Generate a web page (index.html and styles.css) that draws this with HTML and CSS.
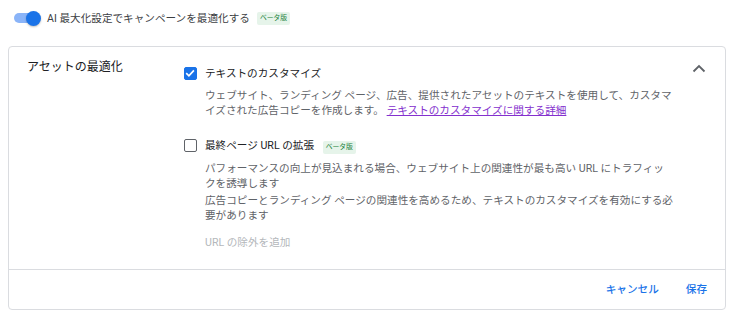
FILE: index.html
```html
<!DOCTYPE html>
<html lang="ja">
<head>
<meta charset="utf-8">
<title>アセットの最適化</title>
<link rel="stylesheet" href="styles.css">
</head>
<body>

<div class="top-bar">
  <span class="toggle"><span class="toggle-thumb"></span></span>
  <span class="top-label">AI 最大化設定でキャンペーンを最適化する</span>
  <span class="beta">ベータ版</span>
</div>

<div class="card">
  <div class="section">
    <div class="section-title">アセットの最適化</div>

    <div class="options">
      <div class="option">
        <span class="checkbox checked">
          <svg viewBox="0 0 14 14" width="14" height="14"><path d="M3.2 7.2 L5.9 9.8 L10.9 4.4" fill="none" stroke="#fff" stroke-width="1.7"/></svg>
        </span>
        <div class="option-body">
          <div class="option-title">テキストのカスタマイズ</div>
          <p class="desc">ウェブサイト、ランディング ページ、広告、提供されたアセットのテキストを使用して、カスタマイズされた広告コピーを作成します。 <a href="#" class="link">テキストのカスタマイズに関する詳細</a></p>
        </div>
      </div>

      <div class="option option-second">
        <span class="checkbox"></span>
        <div class="option-body">
          <div class="option-title">最終ページ URL の拡張 <span class="beta">ベータ版</span></div>
          <p class="desc">パフォーマンスの向上が見込まれる場合、ウェブサイト上の関連性が最も高い URL にトラフィッ<br>クを誘導します</p>
          <p class="desc desc-next">広告コピーとランディング ページの関連性を高めるため、テキストのカスタマイズを有効にする必要があります</p>
          <div class="add-exclusion">URL の除外を追加</div>
        </div>
      </div>
    </div>

    <div class="collapse">
      <svg viewBox="0 0 14 9" width="14" height="9"><path d="M1.5 7.5 L7 2 L12.5 7.5" fill="none" stroke="#5f6368" stroke-width="1.8"/></svg>
    </div>
  </div>

  <div class="footer">
    <a href="#" class="btn">キャンセル</a>
    <a href="#" class="btn">保存</a>
  </div>
</div>

</body>
</html>
```

FILE: styles.css
```css
body {
  margin: 0;
  font-family: Roboto, "Noto Sans CJK JP", sans-serif;
  font-size: 10.62px;
  line-height: 15px;
  color: #3c4043;
  background: #fff;
}

/* top toggle row */
.top-bar {
  display: flex;
  align-items: center;
  height: 36px;
  padding-left: 14px;
}

.toggle {
  display: flex;
  align-items: center;
  justify-content: flex-end;
  width: 24px;
  height: 10px;
  border-radius: 5px;
  background: #8ab4f8;
}

.toggle-thumb {
  width: 15px;
  height: 15px;
  border-radius: 50%;
  margin-right: -3px;
  background: #1a73e8;
  box-shadow: 0 1px 2px rgba(0, 0, 0, 0.25);
}

.top-label {
  margin-left: 9px;
}

.beta {
  display: inline-block;
  margin-left: 7px;
  padding: 0 3px;
  font-size: 6.8px;
  line-height: 13px;
  color: #188038;
  background: #e6f4ea;
  border-radius: 2px;
  vertical-align: 1px;
}

/* card */
.card {
  margin: 10px 10px 8px 8px;
  border: 1px solid #dadce0;
  border-radius: 4px;
}

.section {
  display: flex;
  padding: 12px 0 19px 18px;
  border-bottom: 1px solid #dadce0;
}

.section-title {
  width: 157px;
  flex-shrink: 0;
  font-size: 12px;
  line-height: 16px;
  color: #202124;
}

.options {
  padding-top: 7px;
}

.option {
  display: flex;
}

.option-second {
  margin-top: 20px;
}

.checkbox {
  width: 11px;
  height: 11px;
  margin: 1px 8px 0 0;
  flex-shrink: 0;
  border: 1.6px solid #5f6368;
  border-radius: 2px;
}

.checkbox.checked {
  border-color: #1a73e8;
  background: #1a73e8;
}

.checkbox svg {
  display: block;
  margin: -1.6px;
}

.option-body {
  width: 469px;
}

.option-title {
  color: #202124;
}

.option-title .beta {
  margin-left: 6px;
  vertical-align: 0;
}

.desc {
  margin: 7px 0 0;
  color: #5f6368;
}

.desc-next {
  margin-top: 2px;
}

.link {
  color: #8430ce;
}

.add-exclusion {
  margin-top: 12px;
  color: #b4b7bb;
}

.collapse {
  margin-left: auto;
  padding: 5px 19px 0 0;
}

.collapse svg {
  display: block;
}

/* footer buttons */
.footer {
  display: flex;
  justify-content: flex-end;
  align-items: center;
  gap: 27px;
  height: 39px;
  padding: 0 18px 0 0;
}

.btn {
  color: #1a73e8;
  font-weight: 500;
  text-decoration: none;
}
```
